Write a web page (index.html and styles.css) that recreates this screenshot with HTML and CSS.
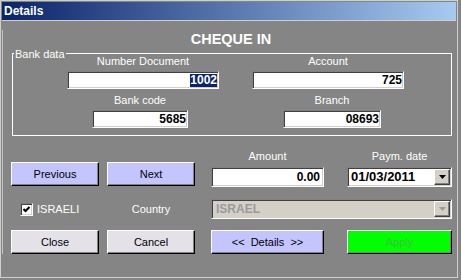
FILE: index.html
```html
<!DOCTYPE html>
<html lang="en">
<head>
    <meta charset="UTF-8">
    <title>Details</title>
    <link rel="stylesheet" href="styles.css">
</head>
<body>
    <div class="window">
        <div class="titlebar">Details</div>
        <div class="client">
            <h1 class="heading">CHEQUE IN</h1>

            <div class="group">
                <span class="legend">Bank data</span>
                <div class="group-row">
                    <div class="field f-doc">
                        <div class="label">Number Document</div>
                        <div class="input"><span class="sel">1002</span></div>
                    </div>
                    <div class="field f-acc">
                        <div class="label">Account</div>
                        <div class="input">725</div>
                    </div>
                </div>
                <div class="group-row">
                    <div class="field f-bank">
                        <div class="label">Bank code</div>
                        <div class="input">5685</div>
                    </div>
                    <div class="field f-branch">
                        <div class="label">Branch</div>
                        <div class="input">08693</div>
                    </div>
                </div>
            </div>

            <div class="row row-a">
                <button class="btn lilac c1">Previous</button>
                <button class="btn lilac c2">Next</button>
                <div class="field c3">
                    <div class="label">Amount</div>
                    <div class="input amount">0.00</div>
                </div>
                <div class="field c4">
                    <div class="label">Paym. date</div>
                    <div class="combo">
                        <span class="combo-text">01/03/2011</span>
                        <span class="drop">
                            <svg width="7" height="4" viewBox="0 0 7 4"><polygon points="0,0 7,0 3.5,4" fill="#000"/></svg>
                        </span>
                    </div>
                </div>
            </div>

            <div class="row row-b">
                <div class="c1 checkline">
                    <span class="check">
                        <svg width="7" height="7" viewBox="0 0 7 7"><polyline points="0.5,3 2.5,5 6.5,1" fill="none" stroke="#000" stroke-width="2"/></svg>
                    </span>
                    <span class="check-label">ISRAELI</span>
                </div>
                <div class="c2 country">Country</div>
                <div class="combo disabled c-wide">
                    <span class="combo-text">ISRAEL</span>
                    <span class="drop">
                        <svg width="7" height="4" viewBox="0 0 7 4"><polygon points="0,0 7,0 3.5,4" fill="#9a9a9a"/></svg>
                    </span>
                </div>
            </div>

            <div class="row row-c">
                <button class="btn grey c1">Close</button>
                <button class="btn grey c2">Cancel</button>
                <button class="btn lilac c3 details">&lt;&lt;  Details  &gt;&gt;</button>
                <button class="btn green c4">Apply</button>
            </div>
        </div>
    </div>
</body>
</html>
```

FILE: styles.css
```css
body {
    margin: 0;
    background-color: #858585;
    font-family: "Liberation Sans", Arial, sans-serif;
    font-size: 11px;
    color: #fff;
}
.window {
    width: 458px;
    height: 278px;
    box-sizing: border-box;
    border: 1px solid #cfcfcf;
    padding: 1px;
    background: #858585;
}
.titlebar {
    height: 18px;
    line-height: 18px;
    padding-left: 2px;
    background: linear-gradient(to right, #0a246a, #a6caf0);
    border-bottom: 1px solid #d4d0c8;
    font-size: 12px;
    font-weight: bold;
    color: #fff;
}
.client {
    box-shadow: inset 1px 0 #c4c4c4;
}
.heading {
    margin: 9px 0 0;
    padding-left: 4px;
    font-size: 14.5px;
    line-height: 18px;
    text-align: center;
    font-weight: bold;
}

/* bank data frame */
.group {
    position: relative;
    width: 440px;
    height: 83px;
    box-sizing: border-box;
    margin: 5px 0 0 10px;
    border: 1px solid #fff;
}
.legend {
    position: absolute;
    left: 1px;
    top: -7px;
    padding: 0 1px;
    line-height: 14px;
    background: #858585;
}
.group-row {
    display: flex;
}
.group-row + .group-row {
    margin-top: 4px;
}
.f-doc { margin-left: 54px; width: 152px; }
.f-acc { margin-left: 33px; width: 152px; }
.f-bank { margin-left: 79px; width: 96px; }
.f-branch { margin-left: 95px; width: 98px; }

.field {
    display: flex;
    flex-direction: column;
}
.label {
    line-height: 14px;
    text-align: center;
    white-space: nowrap;
}
.input {
    margin-top: 3px;
    height: 18px;
    box-sizing: border-box;
    background: #fff;
    border: 1px solid;
    border-color: #808080 #fff #fff #808080;
    box-shadow: inset 1px 1px #404040, inset -1px -1px #d4d0c8;
    padding-right: 1px;
    color: #000;
    font-size: 12px;
    font-weight: bold;
    line-height: 16px;
    text-align: right;
}
.sel {
    display: inline-block;
    line-height: 13px;
    background: #0a246a;
    color: #fff;
}

/* lower rows */
.row {
    display: flex;
}
.c1 { margin-left: 9px; width: 88px; }
.c2 { margin-left: 8px; width: 88px; }
.c3 { margin-left: 16px; width: 113px; }
.c4 { margin-left: 23px; width: 105px; }
.c-wide { margin-left: 16px; width: 241px; }

.row-a {
    margin-top: 13px;
    align-items: flex-start;
}
.row-a .btn {
    margin-top: 13px;
}
.row-a .input,
.row-a .combo {
    margin-top: 4px;
    height: 20px;
    line-height: 18px;
}
.amount {
    padding-right: 3px;
}
.row-b {
    margin-top: 12px;
    height: 20px;
    align-items: center;
}
.row-c {
    margin-top: 11px;
}

.btn {
    height: 24px;
    box-sizing: border-box;
    padding: 0;
    border: 1px solid;
    border-color: #fff #000 #000 #fff;
    box-shadow: inset -1px -1px #808080;
    font-family: "Liberation Sans", Arial, sans-serif;
    font-size: 11px;
    color: #000;
}
.lilac { background: #c4c4ff; }
.grey { background: #e4e2e8; }
.green { background: #00ff00; color: #3fbf3f; }
.details { white-space: pre; }

.combo {
    display: flex;
    align-items: center;
    height: 20px;
    box-sizing: border-box;
    background: #fff;
    border: 1px solid;
    border-color: #808080 #fff #fff #808080;
    box-shadow: inset 1px 1px #404040, inset -1px -1px #d4d0c8;
}
.combo-text {
    flex: 1;
    padding-left: 3px;
    color: #000;
    font-size: 13px;
    font-weight: bold;
}
.drop {
    display: flex;
    align-items: center;
    justify-content: center;
    width: 16px;
    height: 16px;
    box-sizing: border-box;
    margin-right: 1px;
    background: #d4d0c8;
    border: 1px solid;
    border-color: #fff #404040 #404040 #fff;
    box-shadow: inset -1px -1px #808080;
}
.combo.disabled {
    background: #d4d0c8;
}
.combo.disabled .combo-text {
    padding-left: 4px;
    color: #9a9a9a;
    font-size: 12px;
}

.checkline {
    display: flex;
    align-items: center;
    padding-left: 9px;
    box-sizing: border-box;
}
.check {
    display: flex;
    align-items: center;
    justify-content: center;
    width: 13px;
    height: 13px;
    box-sizing: border-box;
    background: #fff;
    border: 1px solid;
    border-color: #808080 #fff #fff #808080;
    box-shadow: inset 1px 1px #404040, inset -1px -1px #d4d0c8;
}
.check-label {
    margin-left: 4px;
}
.country {
    text-align: center;
}
```
